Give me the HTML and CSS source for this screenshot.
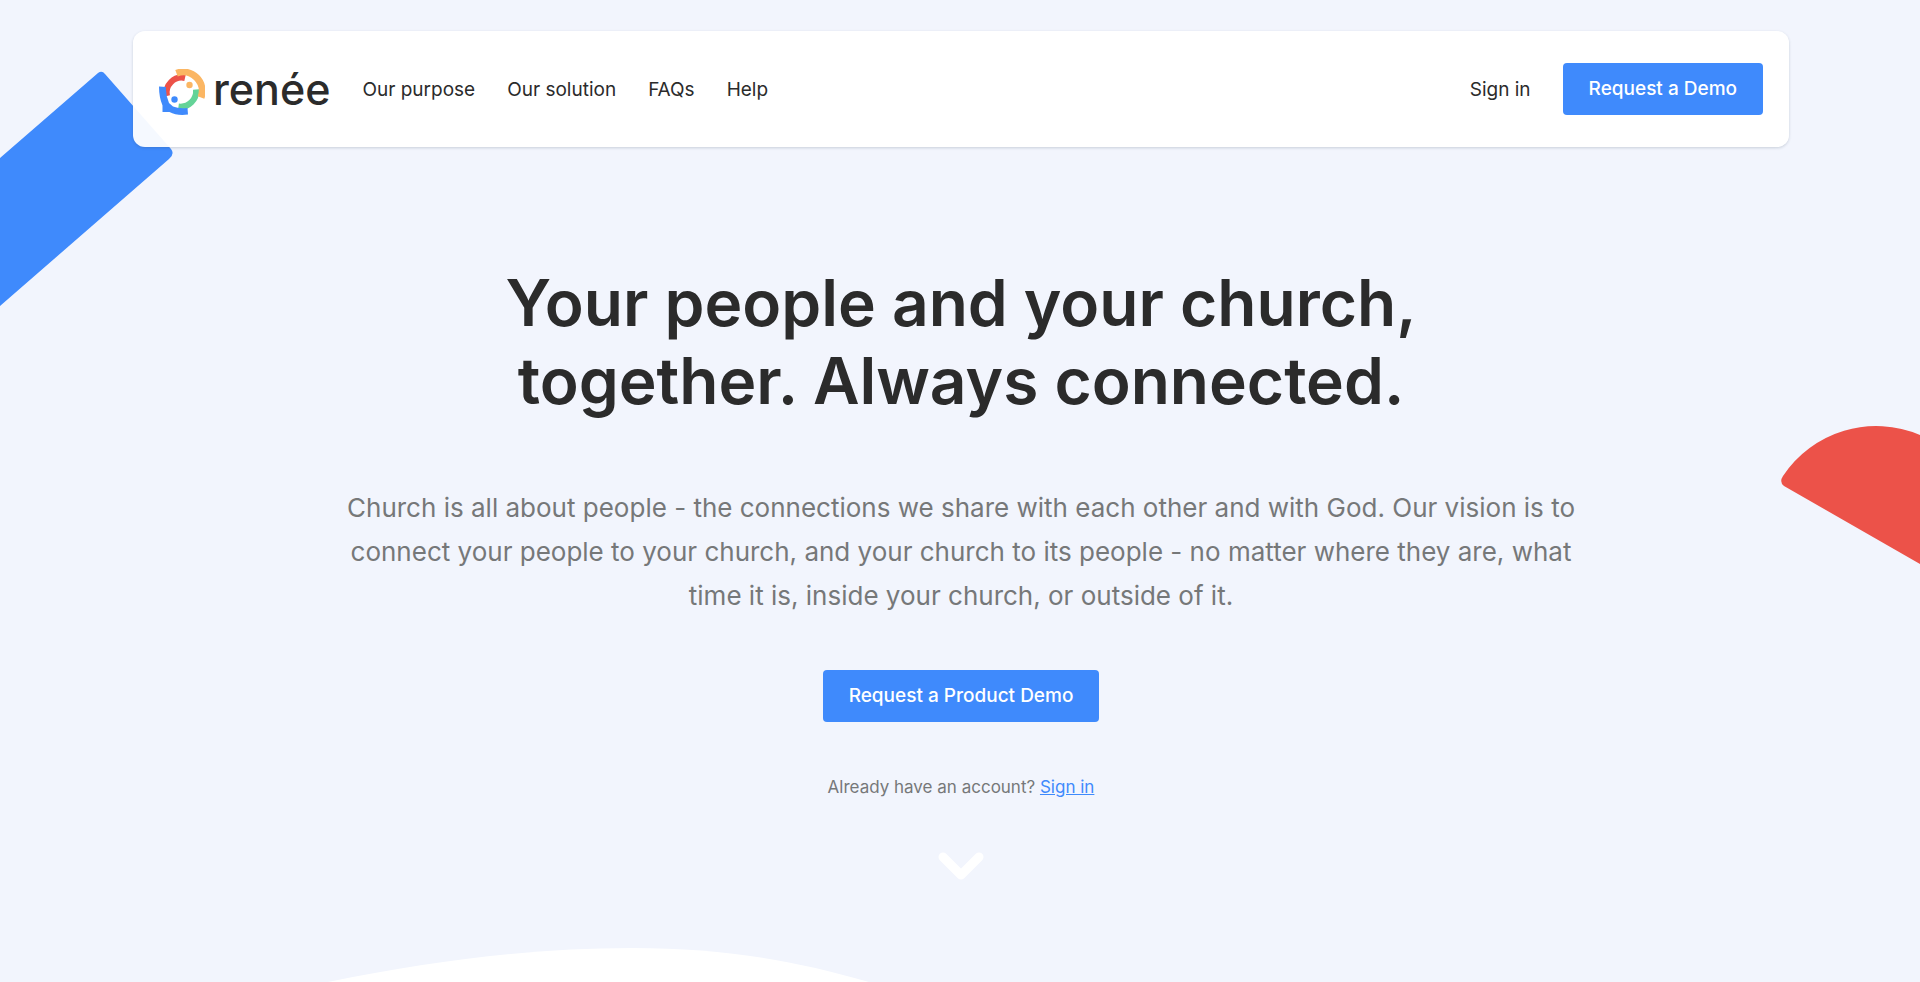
FILE: index.html
```html
<!DOCTYPE html>
<html lang="en">
<head>
<meta charset="utf-8">
<meta name="viewport" content="width=device-width, initial-scale=1">
<title>renée</title>
<link rel="stylesheet" href="styles.css">
</head>
<body>
<div class="page">
  <svg class="shape shape-blue" width="174" height="240" viewBox="0 0 174 240" aria-hidden="true">
    <path fill="#3f8afc" d="M0 88 98 3Q102 0 105 4L171 79Q175 84 169 89L0 236Z"/>
  </svg>
  <svg class="shape shape-red" width="140" height="140" viewBox="0 0 140 140" aria-hidden="true">
    <path fill="#ec5249" d="M3 50A112 112 0 0 1 140 9V138L4 60Q-1 56 3 50Z"/>
  </svg>
  <svg class="shape shape-wave" viewBox="0 0 1920 34" aria-hidden="true">
    <path fill="#fff" d="M328 34C435 12 535 0 632 0C722 0 792 12 869 34Z"/>
  </svg>

  <header class="header">
    <a class="brand" href="#" aria-label="renée home">
      <svg class="brand-mark" width="46" height="46" viewBox="0 0 46 46" fill="none" aria-hidden="true">
        <path stroke="#64d398" stroke-width="6" d="M37 20.500A15.500 15.500 0 0 1 19.500 37.500"/>
        <path stroke="#ec5249" stroke-width="6" d="M8 27A15 15 0 0 1 26 9"/>
        <path stroke="#fbb663" stroke-width="7" d="M17.500 4.200A19 19 0 0 1 42 28.500"/>
        <path fill="#3f8afc" d="M0 17.500 7 18Q6.500 26 10 34L14 37.500Q20 40 28.500 39L29 45.500Q18 47 10.500 43H3.500V36.500Q0 28 0 17.500Z"/>
        <circle cx="30.500" cy="16" r="3.200" fill="#fbb663"/>
        <circle cx="15.500" cy="30.500" r="3.200" fill="#3f8afc"/>
      </svg>
      <span class="brand-name">renée</span>
    </a>
    <nav class="nav" aria-label="Main">
      <a href="#">Our purpose</a>
      <a href="#">Our solution</a>
      <a href="#">FAQs</a>
      <a href="#">Help</a>
    </nav>
    <div class="actions">
      <a class="sign-in" href="#">Sign in</a>
      <button class="button" type="button">Request a Demo</button>
    </div>
  </header>

  <main class="hero">
    <h1 class="title">Your people and your church,<br>together. Always connected.</h1>
    <p class="lead">Church is all about people - the connections we share with each other and with God. Our vision is to connect your people to your church, and your church to its people - no matter where they are, what time it is, inside your church, or outside of it.</p>
    <button class="button" type="button">Request a Product Demo</button>
    <p class="account">Already have an account? <a href="#">Sign in</a></p>
    <svg class="chevron" width="46" height="28" viewBox="0 0 46 28" fill="none" aria-hidden="true">
      <path stroke="#fff" stroke-width="9" stroke-linecap="round" stroke-linejoin="round" d="M5 5 23 23 41 5"/>
    </svg>
  </main>
</div>
</body>
</html>
```
FILE: styles.css
```css
* {
  box-sizing: border-box;
}

body {
  margin: 0;
  font-family: Inter, "Liberation Sans", sans-serif;
  color: #2b2b2b;
  background: #f2f5fd;
}

.page {
  position: relative;
  min-height: 100vh;
  padding: 31px 131px 0 133px;
  overflow: hidden;
}

.shape {
  position: absolute;
}

.shape-blue {
  top: 70px;
  left: 0;
}

.shape-red {
  top: 426px;
  right: 0;
}

.shape-wave {
  bottom: 0;
  left: 0;
  width: 100%;
}

.header {
  position: relative;
  display: flex;
  align-items: center;
  gap: 32px;
  padding: 32px 26px;
  border-radius: 12px;
  background: rgba(255, 255, 255, 0.95);
  box-shadow: 0 1px 3px rgba(40, 60, 80, 0.2);
}

.brand {
  display: flex;
  align-items: center;
  gap: 8px;
  color: inherit;
  text-decoration: none;
}

.brand-mark {
  margin-top: 6px;
}

.brand-name {
  font-size: 43px;
  font-weight: 500;
  line-height: 52px;
}

.nav,
.actions {
  display: flex;
  align-items: center;
  gap: 32px;
  font-size: 19px;
}

.nav a,
.sign-in {
  color: inherit;
  text-decoration: none;
}

.actions {
  margin-left: auto;
}

.button {
  padding: 14px 26px;
  border: 0;
  border-radius: 4px;
  font: 500 19px/24px Inter, "Liberation Sans", sans-serif;
  color: #fff;
  background: #3f8afc;
  cursor: pointer;
}

.hero {
  display: flex;
  flex-direction: column;
  align-items: center;
  padding-top: 117px;
  text-align: center;
}

.title {
  margin: 0;
  font-size: 64px;
  font-weight: 600;
  line-height: 78px;
}

.lead {
  max-width: 1240px;
  margin: 66px 0 52px;
  font-size: 26px;
  line-height: 44px;
  color: #767879;
}

.account {
  margin: 52px 0;
  font-size: 17px;
  line-height: 26px;
  color: #767879;
}

.account a {
  color: #3f8afc;
}
```
